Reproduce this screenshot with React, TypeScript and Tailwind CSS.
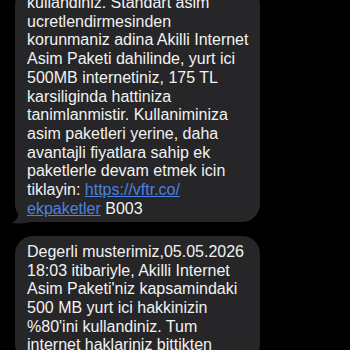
const first = [
  "kullandiniz. Standart asim",
  "ucretlendirmesinden",
  "korunmaniz adina Akilli Internet",
  "Asim Paketi dahilinde, yurt ici",
  "500MB internetiniz, 175 TL",
  "karsiliginda hattiniza",
  "tanimlanmistir. Kullaniminiza",
  "asim paketleri yerine, daha",
  "avantajli fiyatlara sahip ek",
  "paketlerle devam etmek icin",
];

const second = [
  "Degerli musterimiz,05.05.2026",
  "18:03 itibariyle, Akilli Internet",
  "Asim Paketi'niz kapsamindaki",
  "500 MB yurt ici hakkinizin",
  "%80'ini kullandiniz. Tum",
  "internet haklariniz bittikten",
];

const Tail = () => (
  <svg
    className="absolute -left-[5px] -bottom-[2px]"
    width="22"
    height="20"
    viewBox="0 0 22 20"
  >
    <path d="M22 0 L22 18 C16 19 10 20 1 19 C7 17 9 12 9 4 L9 0 Z" fill="#262628" />
  </svg>
);

export default function App() {
  return (
    <div
      className="w-[350px] h-[350px] overflow-hidden bg-black px-[15px]"
      style={{ fontFamily: '"Liberation Sans", Arial, sans-serif' }}
    >
      {/* Incoming message, scrolled partly off the top */}
      <div className="relative -mt-[13px] w-[245px] rounded-[18px] bg-[#262628] px-[12px] pt-[7px] pb-[4px] text-[16px] leading-[18.7px] text-[#f2f2f2]">
        <Tail />
        <div className="relative">
          {first.map((l) => (
            <div key={l} className="whitespace-nowrap">{l}</div>
          ))}
          <div className="whitespace-nowrap">
            tiklayin: <span className="text-[#4b82e0] underline">https://vftr.co/</span>
          </div>
          <div className="whitespace-nowrap">
            <span className="text-[#4b82e0] underline">ekpaketler</span> B003
          </div>
        </div>
      </div>

      <div className="relative mt-[13.5px] w-[245px] rounded-[18px] bg-[#262628] px-[12px] py-[7px] text-[16px] leading-[18.7px] text-[#f2f2f2]">
        {second.map((l) => (
          <div key={l} className="whitespace-nowrap">{l}</div>
        ))}
      </div>
    </div>
  );
}
